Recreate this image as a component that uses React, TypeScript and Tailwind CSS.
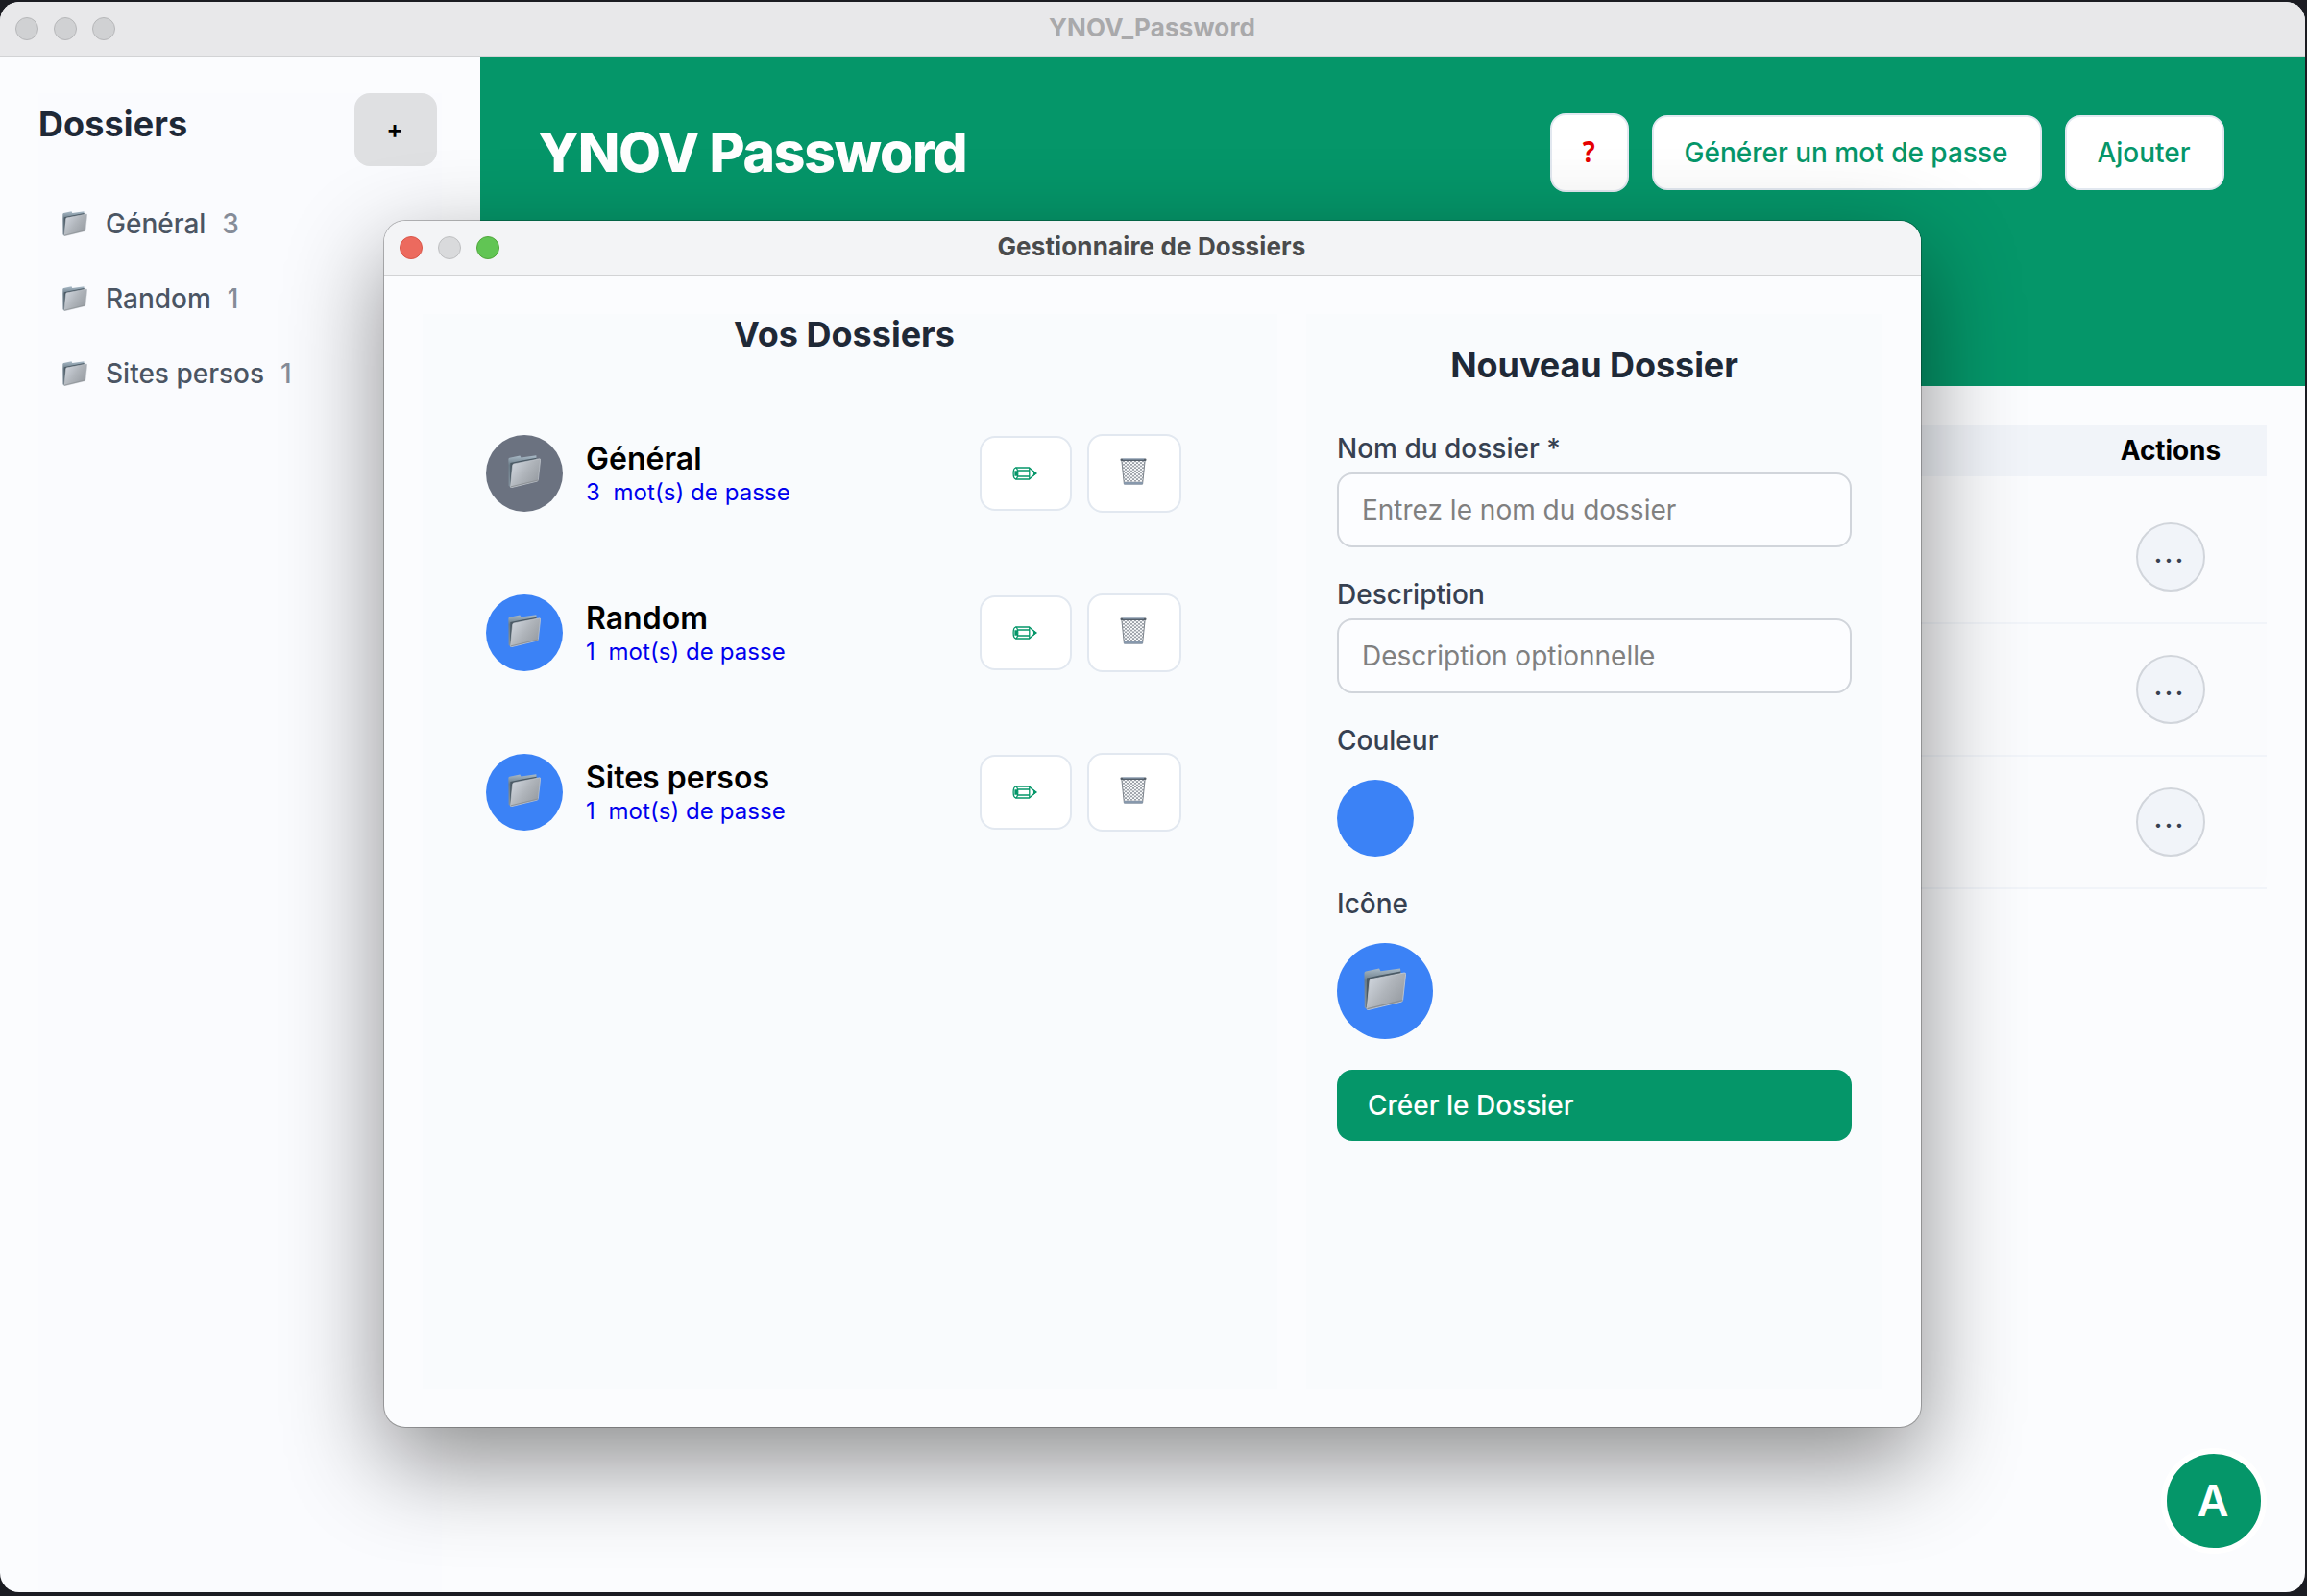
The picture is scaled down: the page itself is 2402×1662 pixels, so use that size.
import React from "react";

function Folder({ className }: { className: string }) {
  return (
    <svg viewBox="0 0 44 44" className={className} aria-hidden="true">
      <defs>
        <linearGradient id="front" x1="0" y1="0.1" x2="1" y2="0.8">
          <stop offset="0" stopColor="#d3d9e1" />
          <stop offset="0.5" stopColor="#b0b5bb" />
          <stop offset="1" stopColor="#94999f" />
        </linearGradient>
        <linearGradient id="back" x1="0" y1="0" x2="0" y2="1">
          <stop offset="0" stopColor="#a9bac7" />
          <stop offset="0.3" stopColor="#6c7d89" />
          <stop offset="1" stopColor="#8694a0" />
        </linearGradient>
      </defs>
      <path d="M0.5 5.5 Q0.5 3.8 2 3.4 L16 0.6 L17.5 3.2 L38 0.4 L38.5 6 L3.5 43.5 L0.8 41 Z" fill="url(#back)" />
      <path d="M3 10.5 L17 7.6 L38.5 3.4 L38 7 L7 14 L5 42 L2.5 41 Z" fill="#4b5a65" />
      <path d="M6 13.6 Q6.2 12 7.8 11.6 L42 5 Q43.8 4.8 43.6 6.4 L40.6 33.4 Q40.4 34.8 39 35.2 L4.6 43.6 Q3 43.8 3.2 42.2 Z" fill="url(#front)" stroke="#c9ced4" strokeWidth="0.8" />
      <path d="M3.4 42.6 L40.4 33.6" stroke="#8b9094" strokeWidth="1.2" fill="none" />
    </svg>
  );
}

function Pencil() {
  return (
    <svg viewBox="0 0 26 14" className="mr-0.5 h-[14px] w-[26px] text-[#059669]" fill="none" stroke="currentColor" strokeWidth="1.3">
      <path d="M3.5 1 H17.5 L24.5 7 L17.5 13 H3.5 C0.3 12 0.3 2 3.5 1 Z" />
      <path d="M3.5 1 C6.5 2 6.5 12 3.5 13 M6 4 H18 M6 10 H18 M17.8 1 V13" />
      <path d="M3 5 h1.4 v4 h-1.4 Z M22.6 5.4 L25 7 L22.6 8.6 Z" fill="currentColor" />
    </svg>
  );
}

function Trash() {
  return (
    <svg viewBox="0 0 28 28" className="mr-0.5 h-7 w-7">
      <defs>
        <pattern id="mesh" width="4" height="3.4" patternUnits="userSpaceOnUse">
          <path d="M0 0 L4 3.4 M4 0 L0 3.4" stroke="#7d848c" strokeWidth="0.7" />
        </pattern>
      </defs>
      <path d="M1.8 2 H26.2 L23.6 27 H4.4 Z" fill="#f8f9fa" />
      <path d="M1.8 2 H26.2 L23.6 27 H4.4 Z" fill="url(#mesh)" stroke="#7d848c" strokeWidth="1" />
      <path d="M4 25 H24 L23.6 27.4 H4.4 Z" fill="#8798ac" />
      <rect x="0.5" y="0.6" width="27" height="2.4" rx="1" fill="#56606b" />
      <rect x="3" y="0.5" width="22" height="0.9" fill="#a9bdd4" />
    </svg>
  );
}

function Lights({ colors }: { colors: string[] }) {
  return (
    <div className="flex gap-4">
      {colors.map((c, i) => (
        <span key={i} className={`size-6 rounded-full border ${c}`} />
      ))}
    </div>
  );
}

const idle = "border-[#b6b7b9] bg-[#d0d1d3]";

const folders = [
  { name: "Général", count: 3, color: "bg-[#6b7280]" },
  { name: "Random", count: 1, color: "bg-[#3b82f6]" },
  { name: "Sites persos", count: 1, color: "bg-[#3b82f6]" },
];

function Sidebar() {
  return (
    <aside className="w-[500px] shrink-0 px-10 pt-[38px]">
      <div className="h-full bg-[#fafbfe]">
        <div className="flex items-start justify-between pr-[5px]">
          <h2 className="mt-[10px] text-[36px] leading-[44px] font-bold tracking-[0.1px] text-[#1f2937]">Dossiers</h2>
          <button className="h-[76px] w-[86px] rounded-[16px] bg-[#dfe0e2] pr-0.5 pb-px text-[26px] font-semibold text-black">+</button>
        </div>
        <ul className="mt-[21px]">
          {folders.map((f) => (
            <li key={f.name} className="flex h-[78px] items-center pl-[25px]">
              <Folder className="size-[26px]" />
              <span className="ml-[19px] text-[28px] font-medium text-[#4b5563]">{f.name}</span>
              <span className="ml-[17px] text-[28px] font-medium text-[#858c98]">{f.count}</span>
            </li>
          ))}
        </ul>
      </div>
    </aside>
  );
}

const headerButton =
  "flex items-center justify-center rounded-[16px] border-2 border-[#e2e8f0] bg-white pr-0.5 text-[28px] font-medium text-[#059669]";

function MainArea() {
  return (
    <main className="flex-1">
      <header className="flex h-[343px] items-start justify-between bg-[#059669] pr-[84px] pl-[60px]">
        <h1 className="mt-[64px] text-[57px] leading-[72px] font-extrabold tracking-[-1.2px] text-white">YNOV Password</h1>
        <div className="mt-[59px] flex items-center gap-6">
          <button className={`${headerButton} h-[82px] w-[82px]`}>
            <span className="origin-center scale-x-90 pb-1 font-['Noto_Sans',sans-serif] text-[30px] font-bold text-[#e60000]">?</span>
          </button>
          <button className={`${headerButton} h-[78px] w-[406px]`}>Générer un mot de passe</button>
          <button className={`${headerButton} h-[78px] w-[166px]`}>Ajouter</button>
        </div>
      </header>
      <section className="mt-[41px] mr-10 ml-10 rounded-b-[16px] bg-[#fafbfd]">
        <div className="flex h-[53px] items-center justify-end bg-[#f1f4f9] pr-12 pb-0.5 text-[28px] font-bold tracking-[-0.1px] text-black">
          Actions
        </div>
        <div className="h-4" />
        {folders.map((f) => (
          <div key={f.name} className="flex h-[138px] items-center justify-end border-b-2 border-[#f1f4f9] pr-16">
            <button className="flex size-[72px] items-center justify-center rounded-full border-2 border-[#d1d5db] bg-[#f1f4f9] pr-0.5 pb-2 text-[28px] font-semibold tracking-[2px] text-[#374151]">
              ...
            </button>
          </div>
        ))}
      </section>
    </main>
  );
}

function FolderList() {
  return (
    <section className="w-[890px] bg-[#f9fbfd]">
      <h2 className="-mt-px pr-3 text-center text-[36px] leading-[44px] font-bold text-[#1f2937]">Vos Dossiers</h2>
      <ul className="mt-10">
        {folders.map((f) => (
          <li key={f.name} className="flex h-[166px] items-center pr-[100px] pl-[66px]">
            <div className={`flex size-20 items-center justify-center rounded-full pb-1 ${f.color}`}>
              <Folder className="size-[34px]" />
            </div>
            <div className="ml-6 flex-1 pt-px">
              <div className="mb-px text-[32px] leading-[38px] font-semibold text-black">{f.name}</div>
              <div className="text-[24px] leading-[30px] tracking-[0.06px] whitespace-pre text-[#0000ee]">{f.count + "  mot(s) de passe"}</div>
            </div>
            <button className="flex h-[78px] w-24 items-center justify-center rounded-[16px] border-2 border-[#e2e8f0] bg-white">
              <Pencil />
            </button>
            <button className="ml-4 flex h-[82px] w-[98px] items-center justify-center rounded-[16px] border-2 border-[#e2e8f0] bg-white pb-1">
              <Trash />
            </button>
          </li>
        ))}
      </ul>
    </section>
  );
}

const label = "block text-[28px] leading-[34px] font-medium text-[#374151]";
const field =
  "mt-2 block h-[78px] w-full rounded-[16px] border-2 border-[#d1d5db] bg-[#fcfdff] px-6 text-[28px] placeholder:text-[#808080]";

function NewFolderForm() {
  return (
    <section className="w-[600px] bg-[#f9fbfd] px-8 pt-[31px]">
      <h2 className="text-center text-[36px] leading-[44px] font-bold tracking-[-0.08px] text-[#1f2937]">Nouveau Dossier</h2>
      <label className={`${label} mt-[48px]`}>Nom du dossier *</label>
      <input className={field} placeholder="Entrez le nom du dossier" />
      <label className={`${label} mt-8`}>Description</label>
      <input className={field} placeholder="Description optionnelle" />
      <div className={`${label} mt-8`}>Couleur</div>
      <div className="mt-6 size-20 rounded-full bg-[#3b82f6]" />
      <div className={`${label} mt-8`}>Icône</div>
      <div className="mt-6 flex size-[100px] items-center justify-center rounded-full bg-[#3b82f6] pb-1">
        <Folder className="size-11" />
      </div>
      <button className="mt-8 flex h-[74px] w-full items-center rounded-[16px] bg-[#059669] px-8 text-[28px] font-medium text-white">
        Créer le Dossier
      </button>
    </section>
  );
}

export default function App() {
  return (
    <div className="relative h-[1662px] w-[2402px] overflow-hidden bg-[#1b1c22] pt-[2px] font-['Inter',sans-serif]">
      <div className="relative flex h-[1656px] w-[2400px] flex-col overflow-hidden rounded-[20px] bg-[#fbfcfe]">
        <div className="flex h-[57px] shrink-0 items-center border-b border-[#d2d3d5] bg-[#e8e8ea] px-4">
          <Lights colors={[idle, idle, idle]} />
          <div className="flex-1 pr-[105px] pb-1 text-center text-[26px] font-bold tracking-[0.15px] text-[#a9a9ab]">YNOV_Password</div>
        </div>
        <div className="flex flex-1">
          <Sidebar />
          <MainArea />
        </div>
        <div className="absolute top-[1506px] left-[2250px] flex size-[110px] items-center justify-center rounded-full border-[6px] border-white bg-[#059669] pr-0.5 text-[45px] font-semibold text-white">
          A
        </div>
      </div>

      <div className="absolute top-[230px] left-[400px] flex h-[1256px] w-[1600px] flex-col overflow-hidden rounded-[22px] bg-[#fbfcfe] shadow-[0_0_0_1px_rgba(0,0,0,0.25),0_36px_100px_rgba(0,0,0,0.45)]">
        <div className="flex h-[57px] shrink-0 items-center border-b border-[#d2d3d5] bg-[#f3f4f6] px-4">
          <Lights
            colors={["border-[#d95649] bg-[#ec6a5e]", "border-[#bebfc1] bg-[#d9dadc]", "border-[#50a73c] bg-[#61c554]"]}
          />
          <div className="flex-1 pr-[106px] pb-1 text-center text-[26px] font-bold tracking-[0.14px] text-[#4a4b4c]">
            Gestionnaire de Dossiers
          </div>
        </div>
        <div className="flex flex-1 justify-between p-10">
          <FolderList />
          <NewFolderForm />
        </div>
      </div>
    </div>
  );
}
